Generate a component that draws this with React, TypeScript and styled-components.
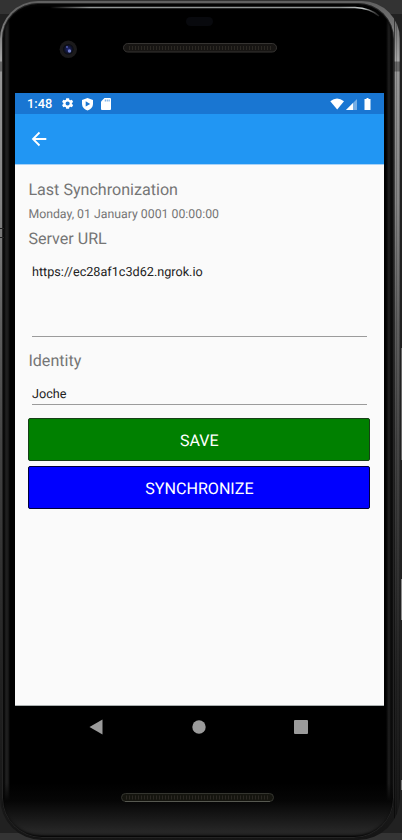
import React from "react";
import styled, { createGlobalStyle } from "styled-components";

const GlobalStyle = createGlobalStyle`
  * { box-sizing: border-box; }
  body { margin: 0; background: #222; overflow: hidden; text-rendering: geometricPrecision; }
  button, input { font: inherit; text-rendering: geometricPrecision; }
`;

const Stage = styled.main`
  position: relative;
  width: 402px;
  height: 840px;
  overflow: hidden;
  padding: 1px 2px 0 0;
  background: linear-gradient(#333 0 14px, #212121 14px 833px, #343434 833px);
  font-family: Roboto, "Liberation Sans", sans-serif;
`;

const Rail = styled.div`
  height: 839px;
  padding: 2px 6px 0 2px;
  border-radius: 38px 38px 42px 42px;
  background: linear-gradient(90deg, transparent 394px, #0008 394px 395px, transparent 395px 396px, #0003 396px 397px, transparent 397px 399px, #0004 399px),
    linear-gradient(
    #606060 0, #707070 20px, #a6a6a6 60px, #666 61px, #666 70px, #979797 71px,
    #858585 200px, #606060 320px, #454545 440px, #333 560px, #222 680px, #151515 839px
  );
`;

const Bezel = styled.div`
  display: flex;
  flex-direction: column;
  height: 835px;
  padding: 90px 10px 0 13px;
  border-radius: 36px 36px 40px 40px;
  background: linear-gradient(transparent 780px, #060606 798px, #151515 812px, #262626 828px, #242424 832px, #080808 835px),
    linear-gradient(90deg, #191919 0, #050505 2px, #202020 4px, #1c1c1c 6px, #000 8px,
      #000 384px, #202020 387px, #080808 389px, #171717 392px);
  box-shadow: inset 0 0 0 1px #242424, inset 0 3px 2px #050505, inset 0 -4px 3px -2px #000;
`;

const FrameArt = styled.svg`
  position: absolute;
  left: 0;
  top: 0;
  pointer-events: none;
`;

const Screen = styled.section`
  display: flex;
  flex-direction: column;
  flex: none;
  width: 369px;
  height: 613px;
  background: #fafafa;
  border-bottom: 1px solid #aab0b0;
`;

const StatusBar = styled.header`
  display: flex;
  align-items: center;
  justify-content: space-between;
  height: 21px;
  padding: 0 12px 0 12px;
  background: #1976d2;
  color: #fff;
`;

const StatusGroup = styled.div<{ $gap: number }>`
  display: flex;
  align-items: center;
  gap: ${({ $gap }) => $gap}px;
`;

const Clock = styled.span`
  width: 26px;
  height: 21px;
  margin-right: 1px;
  padding-top: 1px;
  font-size: 12.8px;
  font-weight: 500;
  line-height: 21px;
  white-space: nowrap;
`;

const AppBar = styled.div`
  display: flex;
  align-items: center;
  height: 51px;
  padding-left: 15px;
  background: #2196f3;
  border-bottom: 1px solid #a8d2f7;
`;

const BackButton = styled.button`
  display: flex;
  padding: 0;
  border: 0;
  background: none;
  color: #fff;
`;

const Form = styled.form`
  display: flex;
  flex-direction: column;
  padding: 13px 14px 0 13.4px;
`;

const Label = styled.label<{ $before?: number; $after?: number }>`
  height: 24px;
  margin-top: ${({ $before = 0 }) => $before}px;
  margin-bottom: ${({ $after = 0 }) => $after}px;
  color: #757575;
  font-size: 16.1px;
  line-height: 24px;
`;

const Timestamp = styled.p`
  height: 24px;
  margin: 0 0 1px;
  color: #757575;
  font-size: 12.3px;
  line-height: 26px;
`;

const Field = styled.input<{ $height: number; $text: number }>`
  width: 335px;
  height: ${({ $height }) => $height}px;
  margin: 0 0 0 3.6px;
  padding: 0 0 ${({ $height, $text }) => $height - $text - 1}px;
  border: 0;
  border-bottom: 1px solid #9b9b9b;
  border-radius: 0;
  outline: 0;
  background: none;
  color: #212121;
  font-size: 12.65px;
`;

const Actions = styled.div`
  display: flex;
  flex-direction: column;
  gap: 5px;
  padding-top: 13px;
`;

const Action = styled.button<{ $color: string; $edge: string }>`
  width: 342px;
  height: 43px;
  padding: 1px 0 0;
  border: 1px solid ${({ $edge }) => $edge};
  border-radius: 2px;
  background: ${({ $color }) => $color};
  color: #fff;
  font-size: 16.1px;
`;

const Navigation = styled.nav`
  display: flex;
  align-items: center;
  justify-content: space-between;
  height: 42px;
  padding: 0 76px 0 74px;
  flex: none;
`;

function Device() {
  return (
    <FrameArt width="402" height="840" viewBox="0 0 402 840" aria-hidden="true">
      <defs>
        <linearGradient id="glint" x1="50" x2="380" y1="0" y2="0" gradientUnits="userSpaceOnUse">
          <stop offset="0" stopColor="#aaa" stopOpacity="0" />
          <stop offset=".12" stopColor="#929696" />
          <stop offset=".88" stopColor="#929696" />
          <stop offset=".95" stopColor="#c7cccc" />
          <stop offset="1" stopColor="#777" stopOpacity=".2" />
        </linearGradient>
        <radialGradient id="lens">
          <stop offset="0" stopColor="#20277b" />
          <stop offset=".65" stopColor="#11152f" />
          <stop offset="1" stopColor="#08090c" />
        </radialGradient>
        <pattern id="mesh" width="3" height="4" patternUnits="userSpaceOnUse">
          <path d="M.5 0v4" stroke="#2b2823" strokeWidth="1" />
        </pattern>
      </defs>
      <path d="M50 7.5H355Q370 8 379 16" fill="none" stroke="url(#glint)" strokeWidth="1.5" />
      <rect x="186" y="17" width="27" height="9" rx="4.5" fill="#08090d" />
      <circle cx="68.3" cy="49.3" r="8.7" fill="#1b1a1b" />
      <circle cx="68.3" cy="49.3" r="5.3" fill="url(#lens)" />
      <circle cx="69.5" cy="51" r="1.7" fill="#7380cb" />
      <circle cx="67" cy="47" r=".9" fill="#5965bb" />
      <rect x="123.5" y="43.5" width="153" height="8.5" rx="4.25" fill="#171513" stroke="#363432" />
      <rect x="127" y="46" width="146" height="4" fill="url(#mesh)" />
      <rect x="121.5" y="793.5" width="152" height="8" rx="4" fill="#15150f" stroke="#34352f" />
      <path d="M125 801.5h145" stroke="#66675f" strokeWidth=".7" />
      <rect x="125" y="795.5" width="145" height="4" fill="url(#mesh)" />
      <path d="M0 228.5h4M0 237.5h4" stroke="#222" />
      <path d="M401.5 348v112" stroke="#666" />
      <path d="M401.5 579v41" stroke="#8a8a8a" />
      <path d="M401.5 780v10" stroke="#777" />
    </FrameArt>
  );
}

function GearIcon() {
  return (
    <svg width="13" height="13" viewBox="1 1 22 22" fill="currentColor">
      <path fillRule="evenodd" d="M19.4 13a8 8 0 0 0 0-2l2.2-1.7-2.1-3.7-2.6 1.1a8 8 0 0 0-1.8-1L14.7 3h-5l-.4 2.7a8 8 0 0 0-1.8 1L4.900 5.600 2.800 9.300 5 11a8 8 0 0 0 0 2l-2.200 1.700 2.100 3.700 2.600-1.100a8 8 0 0 0 1.800 1l.4 2.700h5l.4-2.700a8 8 0 0 0 1.800-1l2.600 1.100 2.100-3.700zM12.200 15.500a3.500 3.500 0 1 1 0-7 3.500 3.500 0 0 1 0 7z" />
    </svg>
  );
}

function ShieldIcon() {
  return (
    <svg width="13" height="14" viewBox="0 0 13 14">
      <path d="M6.5 1 12 3v4c0 3.2-2.3 5.5-5.5 6.5C3.3 12.5 1 10.2 1 7V3z" fill="#fff" />
      <path d="M4.7 4.3v5.2L9.2 6.9z" fill="#1976d2" />
    </svg>
  );
}

function CardIcon() {
  return (
    <svg width="10" height="12" viewBox="0 0 10 12">
      <path d="M3.5 0H9q1 0 1 1v10q0 1-1 1H1q-1 0-1-1V3.5z" fill="#fff" />
      <path d="M4.3 1.5v2M6.2 1.5v2M8.1 1.5v2" stroke="#1976d2" strokeWidth=".7" />
    </svg>
  );
}

export default function App() {
  return (
    <>
      <GlobalStyle />
      <Stage>
        <Rail>
          <Bezel>
            <Screen>
              <StatusBar>
                <StatusGroup $gap={7}>
                  <Clock>1:48</Clock>
                  <GearIcon />
                  <ShieldIcon />
                  <CardIcon />
                </StatusGroup>
                <StatusGroup $gap={1}>
                  <svg width="15" height="12" viewBox="0 0 15 12">
                    <path d="M1.3 3.2Q8-2 15 3.2L8.2 11.5z" fill="#fff" />
                  </svg>
                  <svg width="12" height="12" viewBox="0 0 12 12">
                    <path d="M1 12 12 1v11z" fill="#78afe5" />
                    <path d="M1 12 8 5v7z" fill="#fff" />
                  </svg>
                  <svg width="14" height="12" viewBox="0 0 14 12">
                    <path d="M6.5 1h2V0h2v1h2v11h-6V1z" fill="#fff" />
                  </svg>
                </StatusGroup>
              </StatusBar>
              <AppBar>
                <BackButton aria-label="Back">
                  <svg width="18" height="18" viewBox="0 0 18 18" fill="none" stroke="currentColor" strokeWidth="1.8">
                    <path d="M16.3 9H3M9.5 2.5 3 9 9.5 15.5" />
                  </svg>
                </BackButton>
              </AppBar>
              <Form onSubmit={(event) => event.preventDefault()}>
                <Label>Last Synchronization</Label>
                <Timestamp>Monday, 01 January 0001 00:00:00</Timestamp>
                <Label htmlFor="server" $after={12}>Server URL</Label>
                <Field id="server" $height={74} $text={19} defaultValue="https://ec28af1c3d62.ngrok.io" spellCheck={false} />
                <Label htmlFor="identity" $before={12} $after={11}>Identity</Label>
                <Field id="identity" $height={21} $text={20} defaultValue="Joche" spellCheck={false} />
                <Actions>
                  <Action type="button" $color="#008000" $edge="#173f17">SAVE</Action>
                  <Action type="button" $color="#0000ff" $edge="#00003a">SYNCHRONIZE</Action>
                </Actions>
              </Form>
            </Screen>
            <Navigation>
              <svg width="14" height="16" viewBox="0 0 14 16"><path d="M.5 8 13.5.5v15z" fill="#9b9b9b" /></svg>
              <svg width="14" height="14" viewBox="0 0 14 14"><circle cx="7" cy="7" r="6.7" fill="#9b9b9b" /></svg>
              <svg width="14" height="14" viewBox="0 0 14 14"><rect width="14" height="14" rx="1" fill="#9b9b9b" /></svg>
            </Navigation>
          </Bezel>
        </Rail>
        <Device />
      </Stage>
    </>
  );
}
